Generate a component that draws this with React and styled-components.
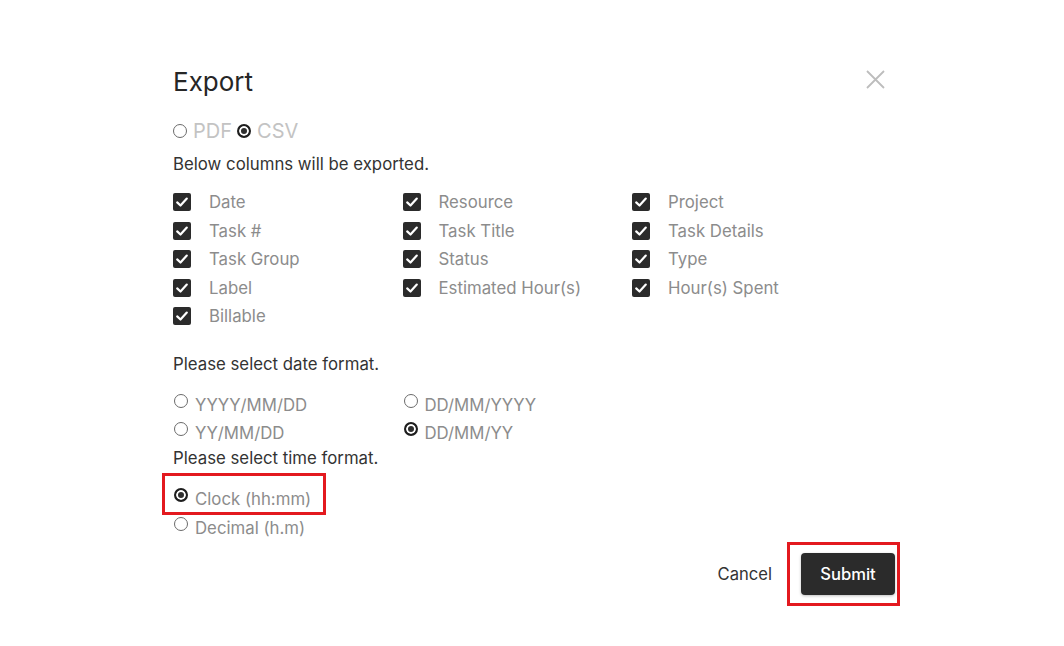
import React from 'react';
import styled, { createGlobalStyle, css } from 'styled-components';

const GlobalStyle = createGlobalStyle`
	html, body {
		margin: 0;
		padding: 0;
		background: #fff;
		font-family: Inter, "Noto Sans", "Liberation Sans", sans-serif;
	}
`

const Page = styled.div`
	padding: 65px 0 40px 173px;
`

const Dialog = styled.div`
	width: 722px;
	display: flex;
	flex-direction: column;
`

const Header = styled.div`
	display: flex;
	justify-content: space-between;
	align-items: center;
	height: 32px;
`

const Title = styled.h2`
	margin: 0;
	font-size: 26px;
	font-weight: 400;
	color: #262626;
	line-height: 32px;
	position: relative;
	top: 1px;
`

const CloseButton = styled.button`
	border: 0;
	background: none;
	padding: 0;
	margin: -4px 10px 0 0;
	width: 20px;
	height: 20px;
	display: flex;
	align-items: center;
	justify-content: center;
	cursor: pointer;
`

const TypeRow = styled.div`
	display: flex;
	align-items: center;
	height: 24px;
	margin-top: 22px;
`

const TypeOption = styled.label`
	display: flex;
	align-items: center;
	gap: 6px;
	margin-right: 5px;
	font-size: 20px;
	color: #c3c3c3;
	line-height: 24px;
`

const Hint = styled.p`
	margin: ${({top}) => top}px 0 0;
	font-size: 16.8px;
	line-height: 22px;
	color: #333;
`

const ColumnGrid = styled.div`
	display: grid;
	grid-template-columns: repeat(3, 229.5px);
	grid-auto-rows: 28.5px;
	margin-top: 13px;
`

const CheckItem = styled.label`
	display: flex;
	align-items: center;
	gap: 18px;
	font-size: 16.8px;
	color: #8c8c8c;
`

const CheckBox = styled.span`
	width: 18px;
	height: 18px;
	border-radius: 2px;
	background: #2b2b2b;
	display: flex;
	align-items: center;
	justify-content: center;
	flex-shrink: 0;
`

const RadioGrid = styled.div`
	display: grid;
	grid-template-columns: repeat(2, 229.5px);
	grid-auto-rows: ${({rowHeight}) => rowHeight}px;
	margin-top: ${({top}) => top}px;
`

const RadioItem = styled.label`
	position: relative;
	display: flex;
	align-items: center;
	gap: 7px;
	padding-left: 1px;
	font-size: 16.8px;
	color: #8c8c8c;
	width: max-content;

	${({highlight}) => highlight && css`
		&::after {
			content: '';
			position: absolute;
			left: -11px;
			right: -15px;
			top: -12px;
			bottom: -1px;
			border: 3px solid #e3191f;
			pointer-events: none;
		}
	`}
`

const Radio = styled.span`
	width: 14px;
	height: 14px;
	border-radius: 50%;
	box-sizing: border-box;
	flex-shrink: 0;
	position: relative;
	top: ${({raise}) => raise ? -4 : 0}px;
	border: 1px solid #6b6b6b;
	background: #fff;

	${({checked}) => checked && css`
		border: 2px solid #1e1e1e;
		background: #2e2e2e;
		box-shadow: inset 0 0 0 2px #fff;
	`}
`

const Footer = styled.div`
	display: flex;
	justify-content: flex-end;
	align-items: center;
	gap: 29px;
	margin-top: 10px;
`

const CancelButton = styled.button`
	border: 0;
	background: none;
	padding: 0;
	font-family: inherit;
	font-size: 16.6px;
	color: #333;
	cursor: pointer;
`

const SubmitButton = styled.button`
	position: relative;
	width: 94px;
	height: 42px;
	border: 0;
	border-radius: 4px;
	background: #2b2b2b;
	color: #fff;
	font-family: inherit;
	font-size: 16.6px;
	font-weight: 500;
	box-shadow: 0 1px 3px rgba(0, 0, 0, 0.25);
	cursor: pointer;

	&::after {
		content: '';
		position: absolute;
		left: -14px;
		right: -5px;
		top: -11px;
		bottom: -11px;
		border: 3px solid #e3191f;
		pointer-events: none;
	}
`

const columns = [
	'Date', 'Resource', 'Project',
	'Task #', 'Task Title', 'Task Details',
	'Task Group', 'Status', 'Type',
	'Label', 'Estimated Hour(s)', 'Hour(s) Spent',
	'Billable'
];

const dateFormats = [
	{ label: 'YYYY/MM/DD' },
	{ label: 'DD/MM/YYYY' },
	{ label: 'YY/MM/DD' },
	{ label: 'DD/MM/YY', checked: true }
];

const CheckMark = () => (
	<svg width="14" height="14" viewBox="0 0 14 14">
		<path d="M2.2 7.4 5.5 10.5 11.8 3.6" fill="none" stroke="#fff" strokeWidth="2.2" strokeLinecap="round" strokeLinejoin="round" />
	</svg>
);

export default function App() {
	return (
		<>
			<GlobalStyle />
			<Page>
				<Dialog>
					<Header>
						<Title>Export</Title>
						<CloseButton aria-label="Close">
							<svg width="19" height="19" viewBox="0 0 19 19">
								<path d="M1 1 18 18M18 1 1 18" stroke="#bdbdbd" strokeWidth="1.8" />
							</svg>
						</CloseButton>
					</Header>

					<TypeRow>
						<TypeOption><Radio />PDF</TypeOption>
						<TypeOption><Radio checked />CSV</TypeOption>
					</TypeRow>

					<Hint top={10}>Below columns will be exported.</Hint>

					<ColumnGrid>
						{columns.map(name => (
							<CheckItem key={name}>
								<CheckBox><CheckMark /></CheckBox>
								{name}
							</CheckItem>
						))}
					</ColumnGrid>

					<Hint top={22}>Please select date format.</Hint>

					<RadioGrid top={16} rowHeight={28}>
						{dateFormats.map(f => (
							<RadioItem key={f.label}>
								<Radio raise checked={f.checked} />
								{f.label}
							</RadioItem>
						))}
					</RadioGrid>

					<Hint top={0}>Please select time format.</Hint>

					<RadioGrid top={16} rowHeight={29}>
						<RadioItem highlight>
							<Radio raise checked />
							Clock (hh:mm)
						</RadioItem>
						<span />
						<RadioItem>
							<Radio raise />
							Decimal (h.m)
						</RadioItem>
					</RadioGrid>

					<Footer>
						<CancelButton>Cancel</CancelButton>
						<SubmitButton>Submit</SubmitButton>
					</Footer>
				</Dialog>
			</Page>
		</>
	);
}
